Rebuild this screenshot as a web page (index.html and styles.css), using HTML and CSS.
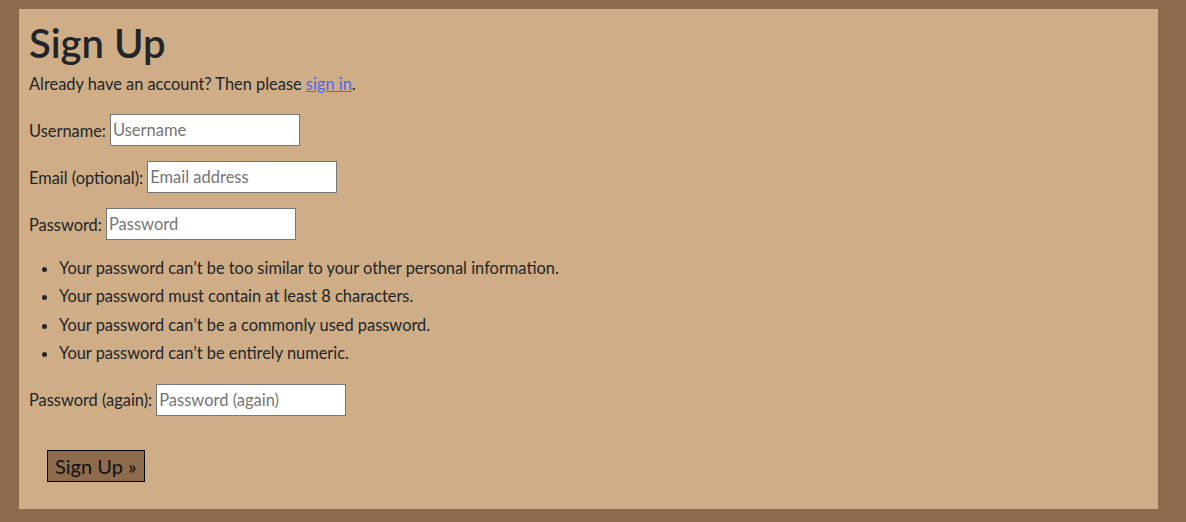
FILE: index.html
```html
<!DOCTYPE html>
<html lang="en">
<head>
<meta charset="utf-8">
<title>Sign Up</title>
<link rel="stylesheet" href="styles.css">
</head>
<body>
<main class="panel">
  <h1 class="title">Sign Up</h1>
  <p class="intro">Already have an account? Then please <a href="#" class="link">sign in</a>.</p>
  <form class="form">
    <p class="row row-first"><label for="u">Username:</label> <input id="u" class="field" type="text" placeholder="Username"></p>
    <p class="row"><label for="e">Email (optional):</label> <input id="e" class="field" type="email" placeholder="Email address"></p>
    <p class="row"><label for="p1">Password:</label> <input id="p1" class="field" type="password" placeholder="Password"></p>
    <ul class="rules">
      <li>Your password can’t be too similar to your other personal information.</li>
      <li>Your password must contain at least 8 characters.</li>
      <li>Your password can’t be a commonly used password.</li>
      <li>Your password can’t be entirely numeric.</li>
    </ul>
    <p class="row row-again"><label for="p2">Password (again):</label> <input id="p2" class="field" type="password" placeholder="Password (again)"></p>
    <button type="submit" class="submit">Sign Up »</button>
  </form>
</main>
</body>
</html>
```
FILE: styles.css
```css
html, body {
  margin: 0;
  padding: 0;
}
body {
  background: #8e6b4c;
  padding: 9px 28px 13px 19px;
  font-family: "Lato", "Open Sans", sans-serif;
  font-size: 16.4px;
  color: #212529;
}
.panel {
  background: #cead87;
  height: 500px;
  box-sizing: border-box;
  padding: 5px 10px 0 10px;
}
.title {
  margin: 0;
  font-family: "Lato", sans-serif;
  font-weight: 600;
  font-size: 40px;
  line-height: 58px;
}
.intro {
  margin: 0;
  line-height: 24px;
}
.link {
  color: #4d68f5;
}
.form {
  display: flex;
  flex-direction: column;
  align-items: flex-start;
}
.row {
  margin: 15px 0 0 0;
  display: flex;
  align-items: center;
  gap: 4px;
}
.row-first {
  margin-top: 18px;
}
.row-again {
  margin-top: 16px;
}
.field {
  width: 190px;
  height: 32px;
  box-sizing: border-box;
  border: 1px solid #767676;
  background: #fff;
  font-family: inherit;
  font-size: 16.5px;
  padding: 2px 2px;
  margin: 0;
}
.field::placeholder {
  color: #757575;
}
.rules {
  margin: 14px 0 0 0;
  padding-left: 30px;
  line-height: 28.4px;
}
.submit {
  margin: 34px 0 0 18px;
  background: #8e6b4c;
  border: 1px solid #000;
  font-family: "Lato", sans-serif;
  font-size: 20px;
  color: #111;
  height: 32px;
  padding: 0 7px;
}
```
